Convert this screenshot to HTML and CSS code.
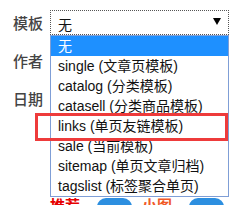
FILE: index.html
```html
<!DOCTYPE html>
<html lang="zh-CN">
<head>
  <meta charset="UTF-8">
  <meta name="viewport" content="width=device-width, initial-scale=1.0">
  <title>模板设置</title>
  <link rel="stylesheet" href="styles.css">
</head>
<body>
  <div class="form">
    <!-- 模板 -->
    <div class="row">
      <label class="label">模板</label>
      <div class="field">
        <div class="select">
          <span>无</span>
          <svg class="arrow" width="8" height="7" viewBox="0 0 8 7"><path d="M0 0H8L4 7Z" fill="#000"/></svg>
        </div>
        <ul class="options">
          <li class="active">无</li>
          <li>single (文章页模板)</li>
          <li>catalog (分类模板)</li>
          <li>catasell (分类商品模板)</li>
          <li>links (单页友链模板)</li>
          <li>sale (当前模板)</li>
          <li>sitemap (单页文章归档)</li>
          <li>tagslist (标签聚合单页)</li>
        </ul>
        <div class="mark"></div>
      </div>
    </div>

    <div class="row">
      <label class="label">作者</label>
      <div class="field"><input class="input" type="text"></div>
    </div>

    <div class="row">
      <label class="label">日期</label>
      <div class="field"><input class="input" type="text"></div>
    </div>

    <!-- Flags -->
    <div class="flags">
      <span class="flag flag-red">推荐</span>
      <span class="switch"></span>
      <span class="flag flag-orange">小图</span>
      <span class="switch"></span>
    </div>
  </div>
</body>
</html>
```

FILE: styles.css
```css
* {
  margin: 0;
  padding: 0;
  box-sizing: border-box;
}

body {
  font-family: "Liberation Sans", "Noto Sans CJK SC", sans-serif;
  background: white;
  width: 240px;
  height: 205px;
  overflow: hidden;
}

.form {
  padding-top: 10px;
}

.row {
  display: flex;
  align-items: center;
  height: 25px;
  margin-bottom: 13px;
}

.label {
  width: 50px;
  padding-left: 13px;
  font-family: "Noto Sans CJK SC", sans-serif;
  font-size: 15px;
  font-weight: 500;
  color: #444;
  line-height: 25px;
}

.field {
  position: relative;
  width: 179px;
  height: 25px;
}

.select {
  display: flex;
  align-items: center;
  justify-content: space-between;
  height: 25px;
  padding: 0 7px 0 7px;
  border: 1px dotted #555;
  font-family: "Noto Sans CJK SC", sans-serif;
  font-size: 14px;
  color: #111;
}

.select span {
  margin-top: 3px;
}

.arrow {
  margin-top: -2px;
}

.input {
  width: 100%;
  height: 25px;
  border: 1px solid #ccc;
}

/* Open dropdown */
.options {
  position: absolute;
  top: 25px;
  left: 0;
  width: 179px;
  list-style: none;
  background: white;
  border: 1px solid #7f9ed6;
  z-index: 10;
}

.options li {
  height: 20px;
  line-height: 20px;
  padding-left: 7px;
  font-size: 14px;
  color: #111;
  white-space: nowrap;
}

.options li.active {
  background: #1e90ff;
  color: white;
}

/* Highlight box */
.mark {
  position: absolute;
  top: 103px;
  left: -15px;
  width: 193px;
  height: 28px;
  border: 3px solid #ee3b3b;
  z-index: 20;
}

.flags {
  display: flex;
  align-items: flex-start;
  margin-top: 85px;
  padding-left: 50px;
  height: 18px;
}

.flag {
  font-family: "Noto Sans CJK SC", sans-serif;
  font-size: 15px;
  font-weight: 700;
  line-height: 18px;
  width: 30px;
}

.flag-red {
  color: #e60000;
}

.flag-orange {
  color: #f05a28;
  margin-left: 10px;
}

.switch {
  display: inline-block;
  width: 35px;
  height: 18px;
  margin-top: 2px;
  border-radius: 9px;
  background: #2d8fe0;
  margin-left: 17px;
}
```
